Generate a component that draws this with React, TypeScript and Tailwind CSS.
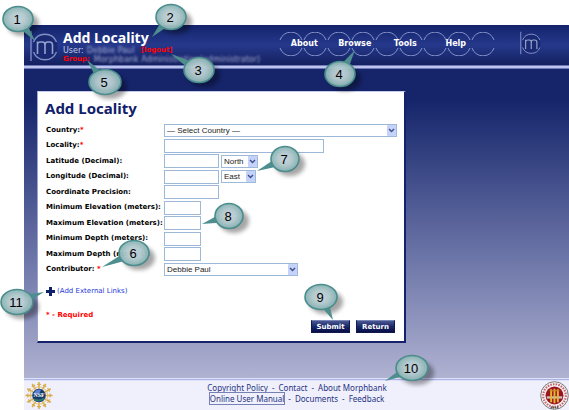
import type { ReactNode } from "react";

const sans = "font-['DejaVu_Sans',Verdana,sans-serif]";
const heading = "font-['Noto_Sans','Open_Sans',sans-serif] font-bold";

function Emblem({ className }: { className: string }) {
  return (
    <svg viewBox="0 0 28 32" className={className} fill="none" aria-hidden="true">
      <path d="M1 1V31" stroke="#7f8cc4" strokeWidth="1.4" />
      <circle cx="15" cy="17" r="12.4" fill="#1a2a72" />
      <path d="M3.500 12A12.400 12.400 0 0 1 26.500 12M3.500 22A12.400 12.400 0 0 0 26.500 22" stroke="#8290c6" strokeWidth="1.300" />
      <path d="M7.500 24V11.500M7.500 14Q8 12 10.500 12H12.500Q15 12 15 15V24M15 15Q15 12 17.500 12H19.500Q22.500 12 22.500 15V24" stroke="#94a0d0" strokeWidth="1.600" />
    </svg>
  );
}

const circles = [12, 36, 60, 84, 108, 132, 156, 180, 204];

function MainNav() {
  return (
    <nav className="relative mt-[7px] h-6 w-[216px] shrink-0" aria-label="Main">
      <svg viewBox="0 0 216 24" className="absolute inset-0 h-6 w-[216px]" fill="none" aria-hidden="true">
        {circles.map((x) => (
          <g key={x} stroke="#8794cb" strokeWidth="1">
            <path d={`M${x - 11} 8A11.600 11.600 0 0 1 ${x + 11} 8`} />
            <path d={`M${x - 11} 16A11.600 11.600 0 0 0 ${x + 11} 16`} />
          </g>
        ))}
      </svg>
      <div className="relative flex h-6 w-[202px] items-center">
        {["About", "Browse", "Tools", "Help"].map((item) => (
          <a key={item} href="#" className="flex-1 text-center text-[8px] font-bold text-white">
            {item}
          </a>
        ))}
      </div>
    </nav>
  );
}

function Row({ id, label, required, children }: { id: string; label: string; required?: boolean; children: ReactNode }) {
  return (
    <div className="flex items-center odd:h-4 even:h-[15px]">
      <label htmlFor={id} className="w-[118px] shrink-0 text-[7px] font-bold whitespace-nowrap text-black">
        {label}
        {required && <span className="text-[#f00]">*</span>}
      </label>
      {children}
    </div>
  );
}

const box = "border border-[#9db8d8] bg-white";

function Select({ id, label, className, options }: { id: string; label?: string; className: string; options: string[] }) {
  return (
    <span className={`relative block h-[13px] ${className}`}>
      <select
        id={id}
        aria-label={label}
        className={`block h-[13px] w-full appearance-none pl-0.5 font-['Liberation_Sans',Arial,sans-serif] text-[8px] leading-[11px] text-[#222] ${box}`}
      >
        {options.map((o) => (
          <option key={o}>{o}</option>
        ))}
      </select>
      <svg viewBox="0 0 9 11" className="pointer-events-none absolute top-px right-px h-[11px] w-[9px]" aria-hidden="true">
        <rect width="9" height="11" rx="1" fill="#c5d2fa" />
        <path d="M2 4L4.500 6.500L7 4" fill="none" stroke="#40528c" strokeWidth="1.500" />
      </svg>
    </span>
  );
}

function TextBox({ id, className }: { id: string; className: string }) {
  return <input id={id} type="text" className={`block h-[14px] px-1 text-[8px] ${className} ${box}`} />;
}

function ActionButton({ children }: { children: ReactNode }) {
  return (
    <button
      type="button"
      className="h-[13px] w-[39px] border border-[#10194f] border-t-[#7984b8] bg-linear-to-b from-[#4a578f] via-[#1a286c] to-[#080f45] text-center text-[7px] leading-[10px] font-bold text-white"
    >
      {children}
    </button>
  );
}

const callouts = [
  { n: 1, x: 18, y: 19, rx: 16, tx: 35, ty: 41 },
  { n: 2, x: 171, y: 17, rx: 16, tx: 152, ty: 37 },
  { n: 3, x: 199, y: 70, rx: 16, tx: 171, ty: 54 },
  { n: 4, x: 340, y: 74, rx: 16, tx: 355, ty: 50 },
  { n: 5, x: 105, y: 82, rx: 17, tx: 87, ty: 60 },
  { n: 6, x: 134, y: 253, rx: 16, tx: 102, ty: 267 },
  { n: 7, x: 285, y: 159, rx: 15, tx: 257, ty: 171 },
  { n: 8, x: 229, y: 216, rx: 15, tx: 202, ty: 224 },
  { n: 9, x: 321, y: 297, rx: 17, tx: 333, ty: 320 },
  { n: 10, x: 412, y: 368, rx: 17, tx: 385, ty: 381 },
  { n: 11, x: 17, y: 302, rx: 17, tx: 44, ty: 292 },
];

function Callouts() {
  return (
    <svg viewBox="0 0 569 410" className="pointer-events-none absolute top-0 left-0 h-[410px] w-[569px]">
      <defs>
        <radialGradient id="bubble">
          <stop offset="0" stopColor="#c8d5de" />
          <stop offset="0.5" stopColor="#b4cbd0" />
          <stop offset="1" stopColor="#86b2b2" />
        </radialGradient>
        <filter id="shade" x="-50%" y="-50%" width="200%" height="200%">
          <feGaussianBlur stdDeviation="2" />
        </filter>
      </defs>
      {callouts.map(({ n, x, y, rx, tx, ty }) => {
        const len = Math.hypot(tx - x, ty - y);
        const nx = (-(ty - y) / len) * 3.5;
        const ny = ((tx - x) / len) * 3.5;
        const bx = x + ((tx - x) / len) * 12;
        const by = y + ((ty - y) / len) * 12;
        return (
          <g key={n}>
            <ellipse cx={x + 5} cy={y + 5} rx={rx} ry="12" fill="#000" opacity="0.35" filter="url(#shade)" />
            <path d={`M${bx + nx} ${by + ny}L${tx} ${ty}L${bx - nx} ${by - ny}Z`} fill="#4f8e8f" />
            <ellipse cx={x} cy={y} rx={rx - 1} ry="12.500" fill="url(#bubble)" fillOpacity="0.96" stroke="#4b8c8c" strokeWidth="1.600" />
            <text x={x - 1} y={y + 5} textAnchor="middle" className="fill-black font-['Liberation_Sans',Arial,sans-serif] text-[13px]">
              {n}
            </text>
          </g>
        );
      })}
    </svg>
  );
}

const rays = [0, 30, 60, 90, 120, 150, 180, 210, 240, 270, 300, 330];

function NsfSeal() {
  return (
    <svg viewBox="0 0 30 30" className="h-[29px] w-[30px]" role="img" aria-label="NSF">
      {rays.map((a) => (
        <g key={a} transform={`rotate(${a} 15 15)`} stroke="#d9ab45" fill="none">
          <path d="M15 8V1" strokeWidth="1.600" />
          <path d="M13 3.500H17" strokeWidth="1.200" />
        </g>
      ))}
      <circle cx="15" cy="15" r="9" fill="none" stroke="#e3c274" strokeWidth="1" />
      <circle cx="15" cy="15" r="7" fill="#173a68" />
      <path d="M10 12Q12 8 17 9L16 12L12 14Z" fill="#5c83d8" />
      <path d="M10 19Q15 22 20 18" stroke="#2f7878" strokeWidth="2" fill="none" />
      <text x="15" y="17" textAnchor="middle" className="fill-white font-['Liberation_Serif',serif] text-[6px] font-bold">NSF</text>
    </svg>
  );
}

function UniversitySeal() {
  return (
    <svg viewBox="0 0 30 30" className="h-[29px] w-[29px]" aria-hidden="true">
      <circle cx="15" cy="15" r="14.300" fill="#f4eeee" stroke="#777" strokeWidth="1" />
      <circle cx="15" cy="15" r="11.700" fill="none" stroke="#c0606a" strokeWidth="2.200" strokeDasharray="1.500 1.300" />
      <circle cx="15" cy="15" r="9.300" fill="#9b1420" />
      <path d="M7 17H23" stroke="#c9c2c2" strokeWidth="2.400" />
      <path d="M11.500 8.500V22M15 8V23M18.500 8.500V22" stroke="#e2b632" strokeWidth="2" />
      <path d="M10 10H20" stroke="#c98a20" strokeWidth="1.200" />
      <path d="M11 27.500H19" stroke="#555" strokeWidth="2" strokeDasharray="1.500 0.700" />
    </svg>
  );
}

function FooterLinks({ items, focused }: { items: string[]; focused?: string }) {
  return (
    <div className="flex h-[11px] items-center justify-center gap-1 leading-[11px]">
      {items.map((item, i) => (
        <span key={item} className="flex items-center gap-1">
          {i > 0 && <span>-</span>}
          <a href="#" className={item === focused ? "outline-1 outline-[#7680b5]" : ""}>
            {item}
          </a>
        </span>
      ))}
    </div>
  );
}

export default function App() {
  return (
    <div className={`relative min-h-screen bg-white pt-[25px] pl-6 ${sans}`}>
      <header className="flex h-10 bg-linear-to-b from-[#14246b] via-[#25388b] to-[#142160]">
        <Emblem className="mt-[5px] ml-1.5 h-8 w-7 shrink-0" />
        <div className="ml-[5px] w-54 shrink-0 pt-1 text-[8px] leading-[9px] whitespace-nowrap">
          <div className={`text-[14px] leading-[17px] text-white ${heading}`}>Add Locality</div>
          <div className="flex gap-[3px] text-[#c3c9e6]">
            User:
            <span className="w-[51px] text-[#a2aad0] blur-[1px]">Debbie Paul</span>
            <a href="#" className="text-[7px] font-bold text-[#f00]">[logout]</a>
          </div>
          <div className="flex gap-1">
            <span className="text-[7px] font-bold text-[#f00]">Group:</span>
            <span className="text-[#a2aad0] blur-[1px]">Morphbank Administration(administrator)</span>
          </div>
        </div>
        <MainNav />
        <Emblem className="mt-1.5 ml-[25px] h-6 w-[21px] shrink-0" />
      </header>
      <div className="h-1 border-y border-[#6f7bb8] bg-[#bcc4ee]" />

      <main className="bg-linear-to-b from-[#16246a] from-10% via-[#5a649b] via-50% to-[#b0b2d1] pt-[22px] pr-3 pb-[35px] pl-[13px]">
        <form className="w-[369px] border-t border-r-2 border-b-2 border-l border-t-[#c5cbea] border-r-[#14226c] border-b-[#14226c] border-l-[#9ba3cf] bg-white pr-[7px] pb-2 pl-2">
          <h1 className={`mt-[5px] -ml-px h-[25px] text-[15px] leading-[22px] text-[#10206a] ${heading}`}>Add Locality</h1>
          <div>
            <Row id="country" label="Country:" required>
              <Select id="country" className="w-[233px]" options={["— Select Country —"]} />
            </Row>
            <Row id="locality" label="Locality:" required>
              <TextBox id="locality" className="w-[160px]" />
            </Row>
            <Row id="latitude" label="Latitude (Decimal):">
              <TextBox id="latitude" className="mr-0.5 w-[55px]" />
              <Select id="ns" label="Latitude hemisphere" className="w-[37px]" options={["North", "South"]} />
            </Row>
            <Row id="longitude" label="Longitude (Decimal):">
              <TextBox id="longitude" className="mr-0.5 w-[55px]" />
              <Select id="ew" label="Longitude hemisphere" className="w-[35px]" options={["East", "West"]} />
            </Row>
            <Row id="precision" label="Coordinate Precision:">
              <TextBox id="precision" className="w-[55px]" />
            </Row>
            <Row id="min-elevation" label="Minimum Elevation (meters):">
              <TextBox id="min-elevation" className="w-[37px]" />
            </Row>
            <Row id="max-elevation" label="Maximum Elevation (meters):">
              <TextBox id="max-elevation" className="w-[37px]" />
            </Row>
            <Row id="min-depth" label="Minimum Depth (meters):">
              <TextBox id="min-depth" className="w-[37px]" />
            </Row>
            <Row id="max-depth" label="Maximum Depth (meters):">
              <TextBox id="max-depth" className="w-[37px]" />
            </Row>
            <Row id="contributor" label="Contributor: " required>
              <Select id="contributor" className="w-[134px]" options={["Debbie Paul"]} />
            </Row>
          </div>
          <a href="#" className="mt-2 flex h-3 w-fit items-center gap-0.5 text-[7px] text-[#2638d8]">
            <svg viewBox="0 0 9 9" className="h-[9px] w-[9px]" aria-hidden="true">
              <path d="M4.500 0V9M0 4.500H9" stroke="#10206a" strokeWidth="3" />
            </svg>
            (Add External Links)
          </a>
          <p className="mt-3 h-[11px] text-[7px] leading-3 font-bold text-[#f00]">* - Required</p>
          <div className="flex justify-end gap-1.5 pr-0.5">
            <ActionButton>Submit</ActionButton>
            <ActionButton>Return</ActionButton>
          </div>
        </form>
      </main>

      <div className="h-[3px] border-y border-[#dfe2fa] bg-[#a9b3e4]" />
      <footer className="flex items-start justify-between bg-[#f0effc] font-['Noto_Sans','Open_Sans',sans-serif] text-[8px] text-[#26357f]">
        <NsfSeal />
        <div className="pt-px">
          <FooterLinks items={["Copyright Policy", "Contact", "About Morphbank"]} />
          <FooterLinks items={["Online User Manual", "Documents", "Feedback"]} focused="Online User Manual" />
        </div>
        <UniversitySeal />
      </footer>
      <Callouts />
    </div>
  );
}
